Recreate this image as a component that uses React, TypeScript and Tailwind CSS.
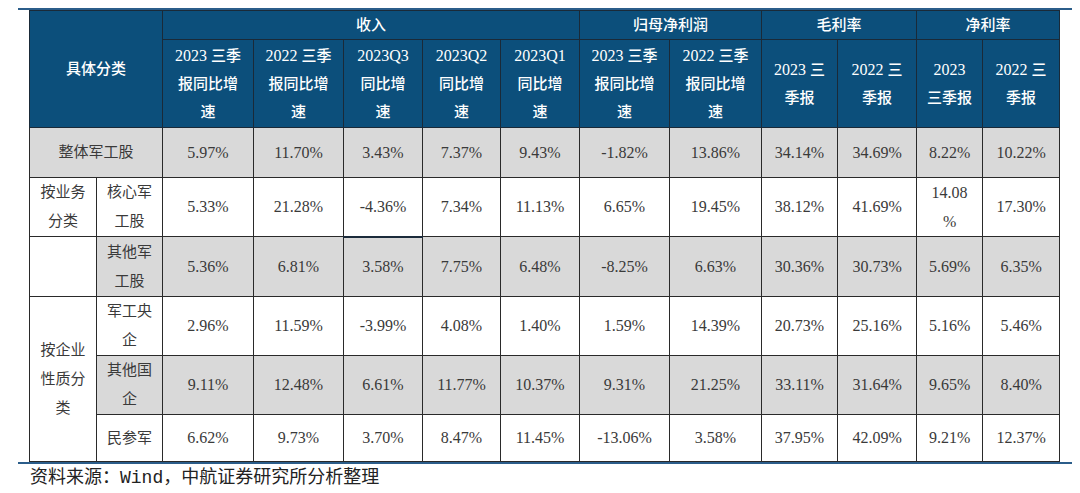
import React from "react";

const cols = [67, 66, 91, 90, 79, 78, 79, 90, 92, 76, 79, 66, 77];

// split ascii runs so digits come out a touch larger than the CJK glyphs
function T({ text }: { text: string }) {
  const parts = text.split(/([\x00-\x7f]+)/).filter(Boolean);
  return (
    <>
      {parts.map((p, i) =>
        /^[\x00-\x7f]+$/.test(p) ? (
          <span key={i} className="text-[16px] font-normal">
            {p}
          </span>
        ) : (
          <span key={i}>{p}</span>
        )
      )}
    </>
  );
}

function Lines({ lines }: { lines: string[] }) {
  return (
    <>
      {lines.map((l, i) => (
        <div key={i}>
          <T text={l} />
        </div>
      ))}
    </>
  );
}

const subHeads = [
  ["2023 三季", "报同比增", "速"],
  ["2022 三季", "报同比增", "速"],
  ["2023Q3", "同比增", "速"],
  ["2023Q2", "同比增", "速"],
  ["2023Q1", "同比增", "速"],
  ["2023 三季", "报同比增", "速"],
  ["2022 三季", "报同比增", "速"],
  ["2023 三", "季报"],
  ["2022 三", "季报"],
  ["2023", "三季报"],
  ["2022 三", "季报"],
];

const hd = "border border-[#1a2a38] bg-[#0c4f7b] text-white text-center font-medium";
const td = "border border-[#2a2a2a] text-center text-[16px] text-[#3a3a3a]";
const lbl = "border border-[#2a2a2a] text-center text-[15px] text-[#3a3a3a] leading-[29px]";

function Nums({ vals, grey }: { vals: React.ReactNode[]; grey?: boolean }) {
  return (
    <>
      {vals.map((v, i) => (
        <td key={i} className={`${td} ${grey ? "bg-[#d9d9d9]" : "bg-white"}`}>
          {v}
        </td>
      ))}
    </>
  );
}

export default function App() {
  return (
    <div
      className="w-[1080px] h-[493px] bg-white pt-[8px]"
      style={{ fontFamily: '"Liberation Serif", "Noto Sans CJK SC", serif' }}
    >
      <div className="ml-[18px] w-[1054px] border-t-2 border-b-2 border-[#2b5d8a]">
        <table className="ml-[11px] w-[1030px] border-collapse table-fixed text-[15px]">
          <colgroup>
            {cols.map((w, i) => (
              <col key={i} style={{ width: w }} />
            ))}
          </colgroup>
          <thead>
            <tr className="h-[29px]">
              <th colSpan={2} rowSpan={2} className={hd}>
                具体分类
              </th>
              <th colSpan={5} className={hd}>
                收入
              </th>
              <th colSpan={2} className={hd}>
                归母净利润
              </th>
              <th colSpan={2} className={hd}>
                毛利率
              </th>
              <th colSpan={2} className={hd}>
                净利率
              </th>
            </tr>
            <tr className="h-[88px]">
              {subHeads.map((s, i) => (
                <th key={i} className={`${hd} leading-[28px]`}>
                  <Lines lines={s} />
                </th>
              ))}
            </tr>
          </thead>
          <tbody>
            <tr className="h-[50px]">
              <td colSpan={2} className={`${lbl} bg-[#d9d9d9]`}>
                整体军工股
              </td>
              <Nums
                grey
                vals={["5.97%", "11.70%", "3.43%", "7.37%", "9.43%", "-1.82%", "13.86%", "34.14%", "34.69%", "8.22%", "10.22%"]}
              />
            </tr>
            <tr className="h-[56px]">
              <td className={`${lbl} bg-white`}>
                按业务
                <br />
                分类
              </td>
              <td className={`${lbl} bg-white`}>
                核心军
                <br />
                工股
              </td>
              {["5.33%", "21.28%", "-4.36%", "7.34%", "11.13%", "6.65%", "19.45%", "38.12%", "41.69%"].map((v, i) => (
                <td key={i} className={`${td} bg-white ${i === 2 ? "border-b-2 border-b-[#1b2b3b]" : ""}`}>
                  {v}
                </td>
              ))}
              <td className={`${td} bg-white leading-[29px]`}>
                14.08
                <br />%
              </td>
              <td className={`${td} bg-white`}>17.30%</td>
            </tr>
            <tr className="h-[60px] border-t border-t-[#7f9bb3]">
              <td className={`${lbl} bg-white border-t-[#7f9bb3]`}></td>
              <td className={`${lbl} bg-[#d9d9d9] border-t-[#7f9bb3]`}>
                其他军
                <br />
                工股
              </td>
              <Nums
                grey
                vals={["5.36%", "6.81%", "3.58%", "7.75%", "6.48%", "-8.25%", "6.63%", "30.36%", "30.73%", "5.69%", "6.35%"]}
              />
            </tr>
            <tr className="h-[58px]">
              <td rowSpan={3} className={`${lbl} bg-white`}>
                按企业
                <br />
                性质分
                <br />类
              </td>
              <td className={`${lbl} bg-white`}>
                军工央
                <br />企
              </td>
              <Nums
                vals={["2.96%", "11.59%", "-3.99%", "4.08%", "1.40%", "1.59%", "14.39%", "20.73%", "25.16%", "5.16%", "5.46%"]}
              />
            </tr>
            <tr className="h-[58px]">
              <td className={`${lbl} bg-[#d9d9d9]`}>
                其他国
                <br />企
              </td>
              <Nums
                grey
                vals={["9.11%", "12.48%", "6.61%", "11.77%", "10.37%", "9.31%", "21.25%", "33.11%", "31.64%", "9.65%", "8.40%"]}
              />
            </tr>
            <tr className="h-[47px]">
              <td className={`${lbl} bg-white`}>民参军</td>
              <Nums
                vals={["6.62%", "9.73%", "3.70%", "8.47%", "11.45%", "-13.06%", "3.58%", "37.95%", "42.09%", "9.21%", "12.37%"]}
              />
            </tr>
          </tbody>
        </table>
      </div>
      <div className="ml-[30px] text-[18px] leading-[26px] text-[#222]">
        资料来源：
        <span style={{ fontFamily: '"Liberation Mono", monospace' }}>Wind</span>
        ，中航证券研究所分析整理
      </div>
    </div>
  );
}
